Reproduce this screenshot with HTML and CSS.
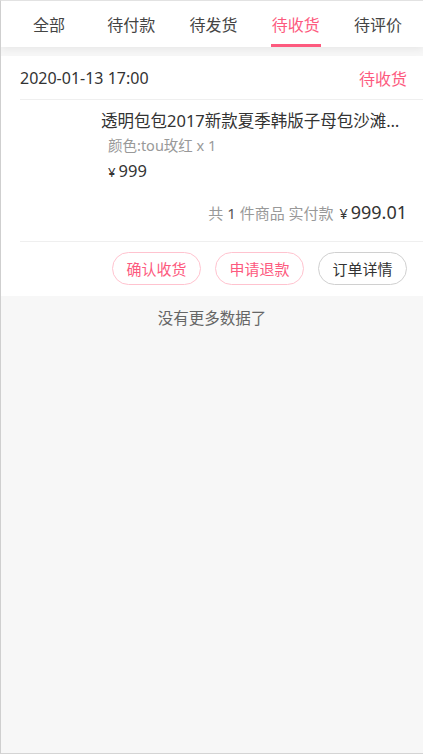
FILE: index.html
```html
<!DOCTYPE html>
<html lang="zh">
<head>
<meta charset="utf-8">
<title>订单</title>
<link rel="stylesheet" href="styles.css">
</head>
<body>
<div class="page">
  <nav class="tabs">
    <div class="tab"><span>全部</span></div>
    <div class="tab"><span>待付款</span></div>
    <div class="tab"><span>待发货</span></div>
    <div class="tab active"><span>待收货</span></div>
    <div class="tab"><span>待评价</span></div>
  </nav>
  <section class="order">
    <div class="order-head">
      <span class="date">2020-01-13 17:00</span>
      <span class="status">待收货</span>
    </div>
    <div class="goods">
      <div class="thumb"></div>
      <div class="info">
        <div class="title">透明包包2017新款夏季韩版子母包沙滩包果冻包</div>
        <div class="spec">颜色:tou玫红 x 1</div>
        <div class="price"><span class="yen">¥</span>999</div>
      </div>
    </div>
    <div class="total">共 <b>1</b> 件商品 实付款 <span class="sum"><span class="yen">¥</span>999.01</span></div>
    <div class="actions">
      <button class="btn pink">确认收货</button>
      <button class="btn pink">申请退款</button>
      <button class="btn gray">订单详情</button>
    </div>
  </section>
  <div class="nomore">没有更多数据了</div>
</div>
</body>
</html>
```
FILE: styles.css
```css
* { box-sizing: border-box; }
html, body { margin: 0; padding: 0; }
body {
  font-family: "Noto Sans", "Noto Sans CJK SC", sans-serif;
  color: #333;
}
.page {
  width: 423px;
  height: 754px;
  background: #f7f7f7;
  border-top: 1px solid #e2e2e2;
  border-left: 1px solid #cfcfcf;
  border-bottom: 1px solid #d4d4d4;
  overflow: hidden;
}
.tabs {
  display: flex;
  height: 46px;
  padding: 0 4px 0 7px;
  background: #fff;
  box-shadow: 0 2px 8px rgba(0,0,0,0.07);
  position: relative;
}
.tab {
  flex: 1;
  display: flex;
  justify-content: center;
  font-size: 16px;
  color: #444;
}
.tab span {
  display: block;
  height: 46px;
  padding: 0 1px;
  border-bottom: 3px solid transparent;
  line-height: 48px;
}
.tab.active { color: #fd5a7e; }
.tab.active span { border-bottom-color: #fd5a7e; }
.order {
  margin-top: 9px;
  background: #fff;
  padding-left: 19px;
}
.order-head {
  height: 44px;
  display: flex;
  align-items: center;
  justify-content: space-between;
  padding: 1px 16px 0 0;
  border-bottom: 1px solid #efefef;
  font-size: 16px;
}
.date { color: #333; }
.status { color: #fd5a7e; }
.goods {
  display: flex;
  padding: 9px 16px 0 0;
}
.thumb {
  width: 70px;
  flex: none;
  margin-right: 11px;
}
.info { min-width: 0; flex: 1; }
.title {
  font-size: 16.5px;
  line-height: 24px;
  white-space: nowrap;
  overflow: hidden;
  text-overflow: ellipsis;
  color: #333;
}
.spec {
  font-size: 14.5px;
  line-height: 24px;
  color: #999;
  padding-left: 7px;
}
.price {
  font-size: 16.5px;
  line-height: 28px;
  color: #333;
  padding-left: 7px;
}
.yen { font-size: 0.8em; margin-right: 3px; }
.total {
  text-align: right;
  padding-right: 16px;
  font-size: 15px;
  color: #999;
  height: 56px;
  line-height: 52px;
  border-bottom: 1px solid #efefef;
}
.total b { font-weight: normal; color: #555; }
.total .sum { font-size: 18px; color: #333; margin-left: 2px; }
.actions {
  display: flex;
  justify-content: flex-end;
  gap: 14px;
  padding: 10px 16px 11px 0;
}
.btn {
  width: 89px;
  height: 33px;
  border-radius: 17px;
  background: #fff;
  font-family: inherit;
  font-size: 15px;
  padding: 0;
  cursor: pointer;
}
.btn.pink { border: 1px solid #ffc3cf; color: #fd5a7e; }
.btn.gray { border: 1px solid #d0d0d0; color: #333; }
.nomore {
  text-align: center;
  font-size: 15.5px;
  color: #666;
  line-height: 44px;
}
```
